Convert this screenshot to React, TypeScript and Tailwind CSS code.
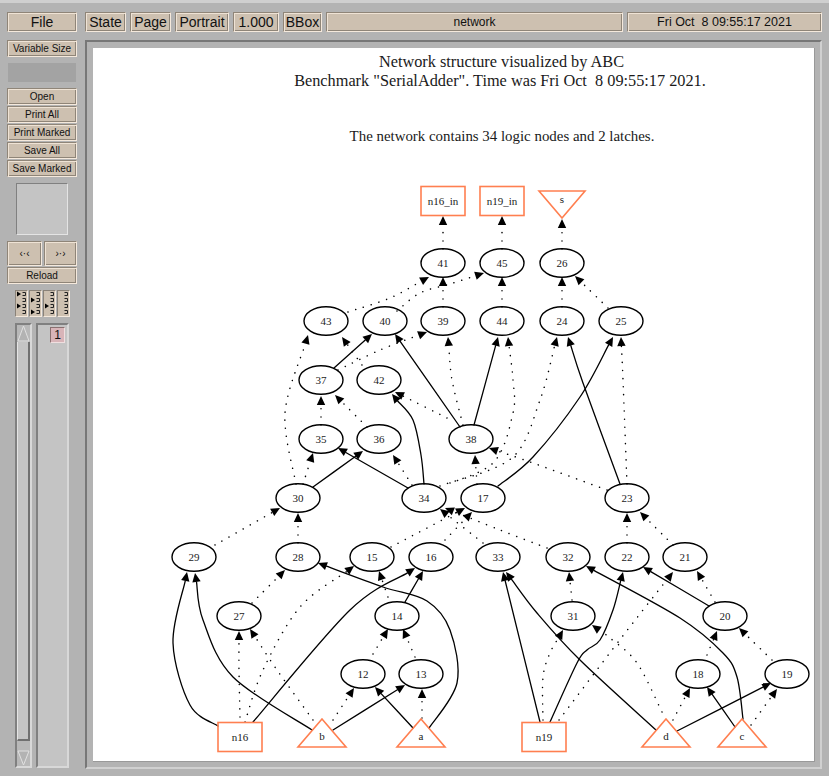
type P = [number, number];
const sans = "font-['Liberation_Sans',Arial,sans-serif]";

function Btn({ label, className = "" }: { label: string; className?: string }) {
  return (
    <div
      className={`flex items-center justify-center border border-t-[#8f8578] border-l-[#8f8578] border-b-[#f5e9dc] border-r-[#f5e9dc] shadow-[inset_1px_1px_0_#efe3d5,inset_-1px_-1px_0_#8f8578] bg-[#cdc0b0] text-[#111] whitespace-pre ${className}`}
    >
      {label}
    </div>
  );
}

function pathOf(pts: P[]) {
  let d = `M${pts[0][0]} ${pts[0][1]}`;
  for (let i = 0; i < pts.length - 1; i++) {
    const p0 = pts[Math.max(i - 1, 0)];
    const p1 = pts[i];
    const p2 = pts[i + 1];
    const p3 = pts[Math.min(i + 2, pts.length - 1)];
    d += `C${p1[0] + (p2[0] - p0[0]) / 6} ${p1[1] + (p2[1] - p0[1]) / 6} ${p2[0] - (p3[0] - p1[0]) / 6} ${p2[1] - (p3[1] - p1[1]) / 6} ${p2[0]} ${p2[1]}`;
  }
  return d;
}

function Edge({ pts, dotted }: { pts: P[]; dotted?: boolean }) {
  const tip = pts[pts.length - 1];
  const prev = pts[pts.length - 2];
  const dx = tip[0] - prev[0];
  const dy = tip[1] - prev[1];
  const len = Math.hypot(dx, dy) || 1;
  const ux = dx / len;
  const uy = dy / len;
  const bx = tip[0] - ux * 9;
  const by = tip[1] - uy * 9;
  const head = `${tip[0]},${tip[1]} ${bx - uy * 4.2},${by + ux * 4.2} ${bx + uy * 4.2},${by - ux * 4.2}`;
  const line = [...pts.slice(0, -1), [bx, by] as P];
  return (
    <g>
      <path
        d={pathOf(line)}
        fill="none"
        stroke="#000"
        strokeWidth={dotted ? 1.5 : 1.3}
        strokeLinecap="round"
        strokeDasharray={dotted ? "0.1 8" : undefined}
      />
      <polygon points={head} fill="#000" />
    </g>
  );
}

const solid: P[][] = [
  [[334, 368], [372, 334]],
  [[460, 427], [395, 334]],
  [[474, 425], [498, 337]],
  [[498, 486], [533, 457], [580, 397], [613, 337]],
  [[620, 484], [583, 383], [568, 337]],
  [[424, 484], [421, 455], [413, 420], [392, 394]],
  [[313, 487], [363, 451]],
  [[408, 488], [338, 448]],
  [[218, 726], [190, 705], [173, 643], [187, 572]],
  [[312, 730], [233, 677], [203, 620], [195, 573]],
  [[253, 722], [350, 610], [415, 568]],
  [[429, 728], [457, 683], [450, 630], [427, 601], [383, 587], [318, 563]],
  [[405, 602], [423, 571]],
  [[413, 728], [375, 687]],
  [[333, 730], [405, 685]],
  [[540, 722], [503, 572]],
  [[656, 730], [580, 660], [537, 613], [506, 572]],
  [[550, 722], [577, 663], [587, 650], [600, 640], [613, 610], [623, 572]],
  [[743, 719], [737, 677], [723, 653], [680, 618], [586, 566]],
  [[709, 606], [643, 567]],
  [[735, 727], [707, 687]],
  [[677, 731], [771, 683]],
];

const dots: P[][] = [
  [[443, 249], [443, 216]],
  [[502, 249], [502, 216]],
  [[562, 249], [562, 219]],
  [[443, 307], [443, 277]],
  [[502, 307], [502, 277]],
  [[562, 307], [562, 277]],
  [[608, 308], [575, 276]],
  [[348, 312], [390, 298], [429, 277]],
  [[397, 311], [420, 293], [450, 284], [484, 273]],
  [[338, 370], [380, 350], [427, 332]],
  [[463, 425], [452, 380], [448, 337]],
  [[440, 486], [493, 463], [513, 413], [513, 380], [508, 337]],
  [[450, 483], [513, 457], [540, 400], [557, 337]],
  [[627, 484], [623, 380], [621, 337]],
  [[321, 425], [321, 396]],
  [[367, 427], [335, 395]],
  [[447, 418], [395, 392]],
  [[607, 490], [533, 463], [489, 448]],
  [[477, 484], [475, 455]],
  [[303, 484], [313, 453]],
  [[412, 485], [393, 455]],
  [[296, 484], [285, 413], [308, 335]],
  [[362, 365], [342, 337]],
  [[298, 543], [298, 513]],
  [[215, 545], [280, 508]],
  [[252, 603], [285, 570]],
  [[240, 717], [239, 670], [239, 631]],
  [[313, 720], [277, 670], [250, 629]],
  [[245, 722], [263, 670], [300, 607], [354, 566]],
  [[388, 597], [379, 571]],
  [[373, 654], [388, 629]],
  [[415, 657], [403, 629]],
  [[333, 720], [354, 688]],
  [[422, 718], [422, 689]],
  [[391, 547], [465, 508]],
  [[445, 540], [472, 512]],
  [[483, 543], [440, 509]],
  [[547, 548], [500, 530], [445, 508]],
  [[627, 543], [627, 513]],
  [[673, 545], [640, 512]],
  [[543, 720], [543, 677], [550, 653], [563, 630]],
  [[662, 712], [637, 663], [610, 638], [592, 625]],
  [[572, 600], [569, 572]],
  [[559, 720], [612, 650], [643, 610], [673, 572]],
  [[715, 602], [697, 571]],
  [[707, 655], [717, 631]],
  [[772, 660], [739, 628]],
  [[673, 720], [690, 688]],
  [[751, 725], [777, 689]],
];

const nodes: [string, number, number][] = [
  ["41", 443, 263], ["45", 502, 263], ["26", 562, 263],
  ["43", 326, 321], ["40", 385, 321], ["39", 443, 321], ["44", 502, 321], ["24", 562, 321], ["25", 621, 321],
  ["37", 321, 380], ["42", 379, 380],
  ["35", 321, 439], ["36", 379, 439], ["38", 471, 439],
  ["30", 298, 498], ["34", 424, 498], ["17", 483, 498], ["23", 627, 498],
  ["29", 194, 557], ["28", 298, 557], ["15", 372, 557], ["16", 431, 557], ["33", 498, 557], ["32", 568, 557], ["22", 627, 557], ["21", 685, 557],
  ["27", 239, 616], ["14", 397, 616], ["31", 573, 616], ["20", 725, 616],
  ["12", 363, 674], ["13", 421, 674], ["18", 698, 674], ["19", 787, 674],
];
const boxes: [string, number, number][] = [["n16_in", 443, 201], ["n19_in", 502, 201], ["n16", 240, 737], ["n19", 544, 737]];
const ups: [string, number][] = [["b", 322], ["a", 421], ["d", 666], ["c", 742]];

function Graph() {
  const t = { fontFamily: "'Liberation Serif',serif", fill: "#1a1a1a", textAnchor: "middle" as const };
  return (
    <svg width={721} height={713} viewBox="93 48 721 713" className="block">
      <text x={501.5} y={67} fontSize={16.3} style={t}>Network structure visualized by ABC</text>
      <text x={500} y={86} fontSize={16.3} xmlSpace="preserve" style={t}>{'Benchmark "SerialAdder". Time was Fri Oct  8 09:55:17 2021.'}</text>
      <text x={502} y={141} fontSize={14.9} style={t}>The network contains 34 logic nodes and 2 latches.</text>
      {dots.map((p, i) => <Edge key={i} pts={p} dotted />)}
      {solid.map((p, i) => <Edge key={i} pts={p} />)}
      {nodes.map(([n, x, y]) => (
        <g key={n}>
          <ellipse cx={x} cy={y} rx={22} ry={14.3} fill="none" stroke="#000" strokeWidth={1.4} />
          <text x={x} y={y + 3.5} fontSize={11} style={t}>{n}</text>
        </g>
      ))}
      {boxes.map(([n, x, y]) => (
        <g key={n}>
          <rect x={x - 22} y={y - 14.5} width={44} height={29} fill="none" stroke="#ff7f50" strokeWidth={1.6} />
          <text x={x} y={y + 3.5} fontSize={11} style={t}>{n}</text>
        </g>
      ))}
      <polygon points="539,191 585,191 562,218" fill="none" stroke="#ff7f50" strokeWidth={1.6} />
      <text x={562} y={203} fontSize={11} style={t}>s</text>
      {ups.map(([n, x]) => (
        <g key={n}>
          <polygon points={`${x},719 ${x + 24},747 ${x - 24},747`} fill="none" stroke="#ff7f50" strokeWidth={1.6} />
          <text x={x} y={740} fontSize={11} style={t}>{n}</text>
        </g>
      ))}
    </svg>
  );
}

function PageMark({ marks }: { marks: number[] }) {
  return (
    <div className="w-[13px] h-[27px] bg-[#cdc0b0] border border-t-[#8a8278] border-l-[#8a8278] border-b-[#f5e9dc] border-r-[#f5e9dc]">
      <svg width={11} height={25} viewBox="0 0 11 25" className="block">
        {[0, 1, 2, 3].map((r) => (
          <g key={r}>
            <path d={`M9.5 ${1.5 + r * 6}H6.5M6.5 ${1.5 + r * 6}M9.5 ${1.5 + r * 6}V${4.5 + r * 6}H6.5`} fill="none" stroke="#222" strokeWidth={1} />
            {marks.includes(r) && <polygon points={`1,${0.5 + r * 6} 5,${3 + r * 6} 1,${5.5 + r * 6}`} fill="#000" />}
          </g>
        ))}
      </svg>
    </div>
  );
}

export default function App() {
  return (
    <div className={`w-[829px] h-[776px] overflow-hidden bg-[#b3b3b3] ${sans} flex flex-col`}>
      <div className="h-[3px] bg-[#cfcfcf]" />
      <div className="flex flex-1 pl-[7px] pt-[9px] pr-[7px] gap-2">
        <div className="w-[70px] flex flex-col text-[10px]">
          <Btn label="File" className="h-[20px] text-[14px]" />
          <Btn label="Variable Size" className="h-[17px] mt-2" />
          <div className="h-[19px] mx-px mt-[6px] bg-[#a3a3a3]" />
          <div className="flex flex-col gap-px mt-[6px]">
            <Btn label="Open" className="h-[17px]" />
            <Btn label="Print All" className="h-[17px]" />
            <Btn label="Print Marked" className="h-[17px]" />
            <Btn label="Save All" className="h-[17px]" />
            <Btn label="Save Marked" className="h-[17px]" />
          </div>
          <div className="w-[52px] h-[52px] ml-[9px] mt-[6px] bg-[#c4c4c4] border border-t-[#808080] border-l-[#808080] border-b-[#e4e4e4] border-r-[#e4e4e4]" />
          <div className="flex gap-[2px] mt-[6px]">
            <Btn label="‹·‹" className="w-[35px] h-[25px] text-[10px]" />
            <Btn label="›·›" className="w-[33px] h-[25px] text-[10px]" />
          </div>
          <Btn label="Reload" className="h-[17px] mt-px" />
          <div className="flex gap-px ml-2 mt-[6px]">
            <PageMark marks={[0, 2]} />
            <PageMark marks={[1, 3]} />
            <PageMark marks={[2]} />
            <PageMark marks={[]} />
          </div>
          <div className="flex flex-1 ml-2 mt-[6px] mb-[8px] gap-1">
            <div className="w-[17px] bg-[#b8b8b8] border-2 border-t-[#808080] border-l-[#808080] border-b-[#d8d8d8] border-r-[#d8d8d8] flex flex-col">
              <svg width={13} height={17} viewBox="0 0 13 17" className="block">
                <polygon points="6.5,1 12,16 1,16" fill="#b3b3b3" stroke="#e0e0e0" />
              </svg>
              <div className="flex-1 bg-[#c4c4c4] border-l border-l-[#e4e4e4] border-r-2 border-r-[#707070] border-b-2 border-b-[#707070]" />
              <svg width={13} height={17} viewBox="0 0 13 17" className="block mt-2">
                <polygon points="1,2 12,2 6.5,16" fill="#b3b3b3" stroke="#e0e0e0" />
              </svg>
            </div>
            <div className="w-[33px] bg-[#c4c4c4] border-2 border-t-[#808080] border-l-[#808080] border-b-[#d8d8d8] border-r-[#d8d8d8] pl-[12px] pt-[2px]">
              <div className="w-[15px] h-[16px] bg-[#d8b4b8] border border-t-[#8a7070] border-l-[#8a7070] border-r-[#f0dfe0] border-b-[#f0dfe0] flex items-center justify-center text-[12px] text-[#111]">1</div>
            </div>
          </div>
        </div>
        <div className="flex-1 flex flex-col min-w-0">
          <div className="flex gap-1 h-[20px] text-[14px]">
            <Btn label="State" className="w-[41px]" />
            <Btn label="Page" className="w-[41px]" />
            <Btn label="Portrait" className="w-[54px]" />
            <Btn label="1.000" className="w-[46px]" />
            <Btn label="BBox" className="w-[39px]" />
            <Btn label="network" className="flex-1 text-[12px]" />
            <Btn label="Fri Oct  8 09:55:17 2021" className="w-[195px] text-[12.5px]" />
          </div>
          <div className="mt-2 h-[729px] bg-[#b3b3b3] border-[2px] border-t-[#777] border-l-[#777] border-b-[#d0d0d0] border-r-[#d0d0d0] p-[6px]">
            <div className="bg-white w-[722px] h-[714px] overflow-hidden border-r border-b border-r-[#999] border-b-[#999]">
              <Graph />
            </div>
          </div>
        </div>
      </div>
    </div>
  );
}
